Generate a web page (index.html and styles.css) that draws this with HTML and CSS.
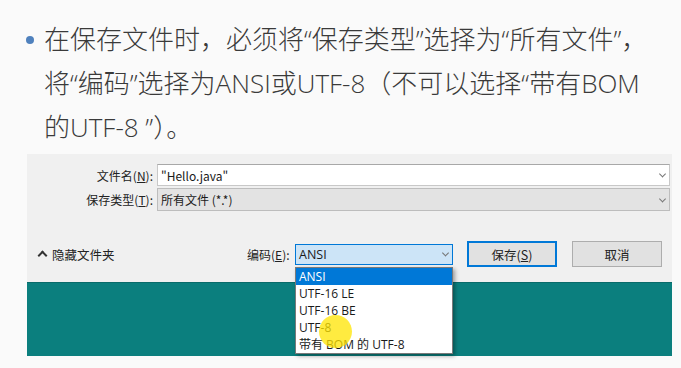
FILE: index.html
```html
<!DOCTYPE html>
<html lang="zh-CN">

<head>
    <meta charset="UTF-8">
    <meta name="viewport" content="width=device-width, initial-scale=1.0">
    <title>保存文件</title>
    <link rel="stylesheet" href="styles.css">
</head>

<body>
    <div class="slide">
        <div class="point">
            <span class="dot"></span>
            <p>在保存文件时，必须将“保存类型”选择为“所有文件”，<br>将“编码”选择为ANSI或UTF-8（不可以选择“带有BOM<br>的UTF-8 ”）。</p>
        </div>

        <div class="dialog">
            <div class="form">
                <div class="row">
                    <label>文件名(<u>N</u>):</label>
                    <div class="field white">"Hello.java"<span class="chev"></span></div>
                </div>
                <div class="row">
                    <label>保存类型(<u>T</u>):</label>
                    <div class="field grey">所有文件 (*.*)<span class="chev"></span></div>
                </div>
                <div class="actions">
                    <div class="toggle"><span class="caret"></span>隐藏文件夹</div>
                    <div class="encoding">
                        <label>编码(<u>E</u>):</label>
                        <div class="select">ANSI<span class="chev"></span></div>
                        <ul class="menu">
                            <li class="active">ANSI</li>
                            <li>UTF-16 LE</li>
                            <li>UTF-16 BE</li>
                            <li>UTF-8</li>
                            <li>带有 BOM 的 UTF-8</li>
                        </ul>
                    </div>
                    <button class="btn primary">保存(<u>S</u>)</button>
                    <button class="btn">取消</button>
                </div>
            </div>
            <div class="desktop"></div>
            <span class="cursor"></span>
        </div>
    </div>
</body>

</html>
```

FILE: styles.css
```css
/* Reset */
body,
p,
ul,
li {
    margin: 0;
    padding: 0;
    box-sizing: border-box;
}

body {
    background-color: #fafafa;
    font-family: "Noto Sans CJK SC", "Noto Sans", sans-serif;
    width: 681px;
    height: 368px;
    overflow: hidden;
}

/* Texto do slide */
.point {
    display: flex;
    align-items: flex-start;
    height: 154px;
    padding-top: 17px;
    box-sizing: border-box;
}

.dot {
    width: 8px;
    height: 8px;
    border-radius: 50%;
    background-color: #4f81bd;
    margin: 19px 10px 0 26px;
    flex-shrink: 0;
}

.point p {
    font-family: "Open Sans", "Noto Sans CJK SC", sans-serif;
    font-size: 26px;
    font-weight: 300;
    line-height: 44px;
    color: #3a3a3a;
    white-space: nowrap;
}

/* Janela de salvar */
.dialog {
    margin-left: 27px;
    width: 645px;
    position: relative;
}

.form {
    background-color: #f0f0f0;
    padding: 10px 2px 13px 0;
    height: 128px;
    box-sizing: border-box;
    font-size: 12px;
    color: #1a1a1a;
}

.row {
    display: flex;
    align-items: center;
    margin-bottom: 2px;
}

.row label {
    width: 126px;
    text-align: right;
    margin-right: 4px;
    color: #222;
}

.field {
    flex: 1;
    height: 22px;
    display: flex;
    align-items: center;
    padding-left: 3px;
    border: 1px solid #c8c8c8;
    box-sizing: border-box;
    position: relative;
}

.field.white {
    background-color: #fff;
    border-top-color: #a8a8a8;
}

.field.grey {
    background-color: #e3e3e3;
    height: 23px;
    border-color: #bdbdbd;
}

.chev {
    position: absolute;
    right: 4px;
    top: 50%;
    width: 4px;
    height: 4px;
    border-right: 1px solid #777;
    border-bottom: 1px solid #777;
    transform: translateY(-70%) rotate(45deg);
}

.actions {
    display: flex;
    align-items: center;
    height: 26px;
    margin-top: 30px;
}

.actions > * {
    flex-shrink: 0;
}

.toggle {
    display: flex;
    align-items: center;
    width: 220px;
    padding-left: 10px;
    box-sizing: border-box;
    font-size: 12.5px;
    color: #222;
}

.caret {
    width: 5px;
    height: 5px;
    border-left: 2px solid #333;
    border-top: 2px solid #333;
    transform: rotate(45deg);
    margin: 3px 6px 0 2px;
}

.encoding {
    display: flex;
    align-items: center;
    position: relative;
    margin-right: 14px;
}

.encoding label {
    width: 44px;
    margin-right: 4px;
    white-space: nowrap;
    color: #222;
}

.select {
    width: 158px;
    height: 21px;
    background-color: #cce4f7;
    border: 1px solid #0078d7;
    box-sizing: border-box;
    display: flex;
    align-items: center;
    padding-left: 3px;
    position: relative;
    font-family: "Open Sans", "Noto Sans CJK SC", sans-serif;
    font-size: 12.5px;
}

.menu {
    position: absolute;
    left: 48px;
    top: 23px;
    width: 158px;
    list-style: none;
    background-color: #fff;
    border: 1px solid #7a7a7a;
    box-shadow: 2px 2px 4px rgba(0, 0, 0, 0.35);
    z-index: 3;
    font-family: "Open Sans", "Noto Sans CJK SC", sans-serif;
    font-size: 12px;
}

.menu li {
    height: 17px;
    line-height: 17px;
    padding-left: 3px;
}

.menu li.active {
    background-color: #0078d7;
    color: #fff;
}

.btn {
    width: 90px;
    height: 26px;
    background-color: #e1e1e1;
    border: 1px solid #adadad;
    font-family: inherit;
    font-size: 12.5px;
    color: #222;
    padding: 0;
}

.btn.primary {
    border: 2px solid #0078d7;
    margin-right: 15px;
}

.desktop {
    height: 74px;
    background-color: #0b7f7e;
    border-top: 1px solid #096b6a;
    box-sizing: border-box;
}

.cursor {
    position: absolute;
    left: 292px;
    top: 161px;
    width: 33px;
    height: 33px;
    border-radius: 50%;
    background-color: rgba(255, 228, 0, 0.75);
    z-index: 4;
}
```
